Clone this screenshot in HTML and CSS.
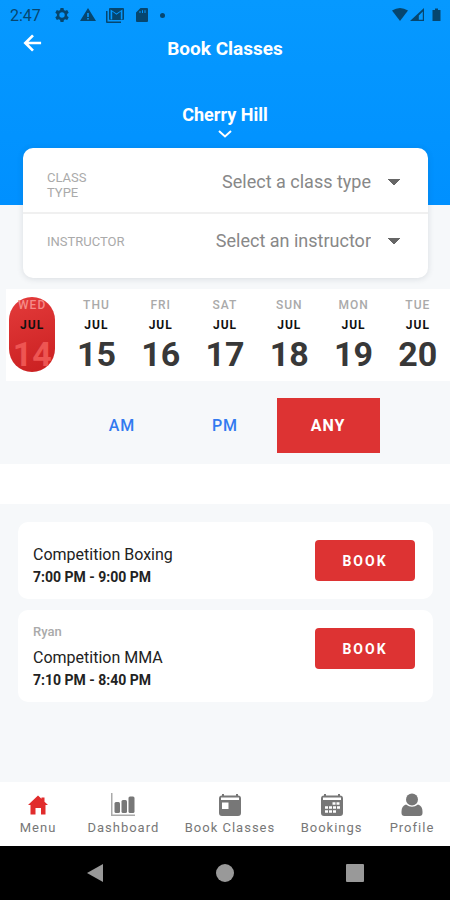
FILE: index.html
```html
<!DOCTYPE html>
<html lang="en">
<head>
<meta charset="utf-8">
<meta name="viewport" content="width=device-width, initial-scale=1">
<title>Book Classes</title>
<link rel="stylesheet" href="styles.css">
</head>
<body>
<header class="hero">
  <div class="status">
    <span class="clock">2:47</span>
    <svg class="status-icon" viewBox="0 0 16 16"><path fill-rule="evenodd" d="M6.5 1h3l.4 2 1.3.8 2-.7 1.5 2.6-1.6 1.4v1.8l1.6 1.4-1.5 2.6-2-.7-1.3.8-.4 2h-3l-.4-2-1.3-.8-2 .7-1.5-2.6 1.6-1.4V7.100L1.300 5.700l1.500-2.600 2 .7L6.100 3zM8 5.300a2.700 2.700 0 1 0 0 5.400 2.700 2.700 0 0 0 0-5.400z"/></svg>
    <svg class="status-icon status-wide" viewBox="0 0 16 16"><path fill-rule="evenodd" d="M8 1l8 13H0zM7.200 6v4h1.600V6zm0 5v1.600h1.600V11z"/></svg>
    <svg class="status-icon status-mail" viewBox="0 0 18 16"><path fill-rule="evenodd" d="M4 1h13a1 1 0 0 1 1 1v10a1 1 0 0 1-1 1H4a1 1 0 0 1-1-1V2a1 1 0 0 1 1-1zm.6 1.600v9.800h1.600V4.500l4.300 3.300 4.300-3.300v7.900h1.600V2.600L10.500 6.400z"/><path d="M0 4h1.500v10.500H15V16H1a1 1 0 0 1-1-1z"/><path d="M7 6l3.500 2.700L14 6v5.500H7z"/></svg>
    <svg class="status-icon" viewBox="0 0 16 16"><path fill-rule="evenodd" d="M6.500 1H13a1 1 0 0 1 1 1v12a1 1 0 0 1-1 1H3a1 1 0 0 1-1-1V5.500zM5.500 4v2h1V4zm2.500-.8V6h1V3.200zm2.500 0V6h1V3.200z"/></svg>
    <span class="dot"></span>
    <svg class="signals" viewBox="0 0 50 16"><path d="M0 3.500Q8 -1.500 16 3.500L8 14z"/><path fill-rule="evenodd" d="M32 1v13H18zM30.800 4.500l-4 4v4.300h4z"/><path d="M43 1.500h3V3h2.500v11h-8V3H43z"/></svg>
  </div>
  <div class="titlebar">
    <button class="back" aria-label="Back"><svg viewBox="0 0 20 20"><path d="M19 10H2M10 1.500L1.500 10l8.500 8.500"/></svg></button>
    <h1>Book Classes</h1>
  </div>
  <button class="location">Cherry Hill<svg viewBox="0 0 14 8"><path d="M1 1l6 5.500L13 1"/></svg></button>
</header>

<main>
  <section class="filters">
    <div class="filter">
      <label for="type">CLASS TYPE</label>
      <select id="type"><option>Select a class type</option></select>
    </div>
    <div class="filter">
      <label for="teacher">INSTRUCTOR</label>
      <select id="teacher"><option>Select an instructor</option></select>
    </div>
  </section>

  <section class="days">
    <button class="day selected"><span class="week">WED</span><span class="month">JUL</span><span class="date">14</span></button>
    <button class="day"><span class="week">THU</span><span class="month">JUL</span><span class="date">15</span></button>
    <button class="day"><span class="week">FRI</span><span class="month">JUL</span><span class="date">16</span></button>
    <button class="day"><span class="week">SAT</span><span class="month">JUL</span><span class="date">17</span></button>
    <button class="day"><span class="week">SUN</span><span class="month">JUL</span><span class="date">18</span></button>
    <button class="day"><span class="week">MON</span><span class="month">JUL</span><span class="date">19</span></button>
    <button class="day"><span class="week">TUE</span><span class="month">JUL</span><span class="date">20</span></button>
  </section>

  <section class="periods">
    <button>AM</button>
    <button>PM</button>
    <button class="active">ANY</button>
  </section>

  <section class="classes">
    <article class="class">
      <div class="info">
        <h2>Competition Boxing</h2>
        <p class="time">7:00 PM - 9:00 PM</p>
      </div>
      <button class="book">BOOK</button>
    </article>
    <article class="class">
      <div class="info">
        <p class="coach">Ryan</p>
        <h2>Competition MMA</h2>
        <p class="time">7:10 PM - 8:40 PM</p>
      </div>
      <button class="book">BOOK</button>
    </article>
  </section>
</main>

<footer>
  <nav class="tabs">
    <a href="#" class="current"><svg viewBox="0 0 24 24"><path d="M12 2.500l3.500 3.300V4.500h3v4.200L22 12h-2.500v9.500H15V15H9.500v6.500h-5V12H2z"/></svg>Menu</a>
    <a href="#"><svg viewBox="0 0 24 24"><path class="axis" d="M0 0h1.500v21.500H24V23H0z"/><rect x="3.500" y="9" width="5.500" height="11" rx="1.500"/><rect x="10.500" y="7" width="5.500" height="13" rx="1.500"/><rect x="17.500" y="3.500" width="6" height="16.500" rx="1.500"/></svg>Dashboard</a>
    <a href="#"><svg viewBox="0 0 24 24"><path fill-rule="evenodd" d="M4 1h2v1.500h12V1h2v1.500a3 3 0 0 1 3 3V20a3 3 0 0 1-3 3H4a3 3 0 0 1-3-3V5.500a3 3 0 0 1 3-3zM3 4.500V7h18V4.500zM4 9.500v6.500h6.500V9.500z"/></svg>Book Classes</a>
    <a href="#"><svg viewBox="0 0 24 24"><path fill-rule="evenodd" d="M4 1h2v1.500h12V1h2v1.500a3 3 0 0 1 3 3V20a3 3 0 0 1-3 3H4a3 3 0 0 1-3-3V5.500a3 3 0 0 1 3-3zM3 4.500V7h18V4.500z"/><path class="cells" d="M12.500 10.500H20M5 14.500h15M5 18.500h11"/></svg>Bookings</a>
    <a href="#"><svg viewBox="0 0 24 24"><circle cx="12" cy="6.500" r="6"/><path d="M6 11.500q6 4.500 12 0 4.500 1.500 4.500 7V20a3 3 0 0 1-3 3h-15a3 3 0 0 1-3-3v-1.500q0-5.500 4.500-7z"/></svg>Profile</a>
  </nav>
  <div class="system">
    <button aria-label="Back"><svg viewBox="0 0 20 20"><path d="M18 1v18L2 10z"/></svg></button>
    <button aria-label="Home"><svg viewBox="0 0 20 20"><circle cx="10" cy="10" r="9"/></svg></button>
    <button aria-label="Recent"><svg viewBox="0 0 20 20"><rect x="1" y="1" width="18" height="18" rx="1"/></svg></button>
  </div>
</footer>
</body>
</html>
```

FILE: styles.css
```css
* { box-sizing: border-box; }

body {
  margin: 0;
  min-height: 100vh;
  display: flex;
  flex-direction: column;
  background: #f6f8fa;
  color: #222;
  font-family: Roboto, sans-serif;
}

button {
  padding: 0;
  border: 0;
  background: none;
  color: inherit;
  font: inherit;
  cursor: pointer;
}

svg { display: block; }
h1, h2, p { margin: 0; }
main { flex: 1; }

/* Header */
.hero {
  padding-bottom: 67px;
  background: linear-gradient(#0699ff, #0090ff);
  color: #fff;
}

.status {
  display: flex;
  align-items: center;
  gap: 10px;
  height: 30px;
  padding: 0 8px 0 10px;
  color: #06466f;
  fill: #06466f;
}

.clock {
  margin-right: 3px;
  font-size: 16px;
}

.status-icon {
  width: 16px;
  height: 16px;
}

.status-mail { width: 18px; }

.dot {
  width: 5px;
  height: 5px;
  border-radius: 50%;
  background: #06466f;
}

.signals {
  width: 50px;
  height: 16px;
  margin-left: auto;
}

.titlebar {
  display: grid;
  grid-template-columns: 44px 1fr 44px;
  height: 38px;
}

.back {
  align-self: start;
  padding: 4px 0 0 23px;
}

.back svg {
  width: 20px;
  height: 18px;
  fill: none;
  stroke: #fff;
  stroke-width: 3;
}

h1 {
  align-self: center;
  text-align: center;
  font-size: 19px;
  line-height: 24px;
  font-weight: 700;
}

.location {
  display: flex;
  flex-direction: column;
  align-items: center;
  gap: 2px;
  margin: 34px auto 0;
  font-size: 18px;
  line-height: 26px;
  font-weight: 700;
}

.location svg {
  width: 14px;
  height: 8px;
  fill: none;
  stroke: #fff;
  stroke-width: 2;
}

/* Filters */
.filters {
  margin: -57px 22px 11px 23px;
  border-radius: 10px;
  background: #fff;
  box-shadow: 0 1px 6px rgba(40, 60, 70, .14);
  position: relative;
}

.filter {
  display: flex;
  align-items: center;
  justify-content: space-between;
  height: 65px;
  padding: 0 28px 0 24px;
}

.filter:first-child {
  height: 66px;
  border-bottom: 2px solid #f0f0f0;
  padding-top: 3px;
}

.filter:last-child {
  height: 64px;
  padding-bottom: 10px;
}

.filter label {
  width: 64px;
  color: #aaa;
  font-size: 13px;
  line-height: 15px;
}

.filter:first-child label { padding-top: 6px; }

.filter select {
  padding: 0 29px 0 0;
  border: 0;
  appearance: none;
  background:
    linear-gradient(to bottom right, #666 50%, transparent 52%) right 0 center / 6px 6px no-repeat,
    linear-gradient(to bottom left, #666 50%, transparent 52%) right 6px center / 6px 6px no-repeat;
  color: #888;
  font: 18px/24px Roboto, sans-serif;
  text-align-last: right;
}

/* Day picker */
.days {
  display: grid;
  grid-template-columns: repeat(7, 1fr);
  justify-items: center;
  height: 92px;
  padding-top: 8px;
  background: linear-gradient(#fff, #fff) 6px 0 no-repeat;
}

.day {
  display: flex;
  flex-direction: column;
  align-items: center;
  width: 46px;
  height: 75px;
  color: #383838;
  font-weight: 700;
}

.week {
  color: #aaa;
  font-size: 12px;
  line-height: 16px;
  font-weight: 500;
  letter-spacing: 1px;
}

.month {
  color: #111;
  font-size: 12px;
  line-height: 24px;
  letter-spacing: 1px;
}

.date {
  font-size: 34px;
  line-height: 34px;
}

.selected {
  border-radius: 23px;
  background: linear-gradient(160deg, #e43b3b, #c91f20);
}

.selected .week { color: #f58b87; }
.selected .date { color: #ee5552; }

/* Time of day */
.periods {
  display: flex;
  justify-content: center;
  padding: 17px 0 11px;
}

.periods button {
  width: 103px;
  height: 55px;
  color: #327af0;
  font-size: 16px;
  font-weight: 500;
  letter-spacing: 1px;
}

.periods .active {
  background: #dd3333;
  color: #fff;
  font-weight: 700;
}

/* Class list */
.classes {
  display: flex;
  flex-direction: column;
  gap: 11px;
  padding: 18px 17px 18px 18px;
  border-top: 40px solid #fff;
}

.class {
  display: flex;
  align-items: flex-start;
  justify-content: space-between;
  padding: 18px 18px 11px 15px;
  border-radius: 10px;
  background: #fff;
}

.info { padding-bottom: 1px; }
.class:first-child .info { padding-top: 3px; }

h2 {
  font-size: 16px;
  line-height: 24px;
  font-weight: 400;
}

.time {
  font-size: 14px;
  line-height: 20px;
  font-weight: 700;
}

.coach {
  margin: -4px 0 6px;
  color: #aaa;
  font-size: 13px;
  line-height: 16px;
  font-weight: 500;
}

.book {
  width: 100px;
  height: 41px;
  border-radius: 4px;
  background: #dd3333;
  color: #fff;
  font-size: 14px;
  font-weight: 700;
  letter-spacing: 2px;
}

/* Bottom bars */
.tabs {
  display: flex;
  justify-content: space-between;
  height: 64px;
  padding: 11px 14px 0;
  background: #fff;
}

.tabs a {
  display: flex;
  flex-direction: column;
  align-items: center;
  gap: 2px;
  min-width: 48px;
  color: #777;
  fill: #777;
  font-size: 13px;
  line-height: 18px;
  letter-spacing: 1px;
  text-decoration: none;
}

.tabs svg {
  width: 24px;
  height: 24px;
}

.tabs .current { fill: #e12c2c; }

.axis { fill: #aaa; }

.cells {
  stroke: #fff;
  stroke-width: 2.500;
  stroke-dasharray: 3 1;
}

.system {
  display: flex;
  justify-content: center;
  gap: 110px;
  height: 54px;
  background: #000;
  fill: #999;
}

.system svg {
  width: 20px;
  height: 20px;
}
```
